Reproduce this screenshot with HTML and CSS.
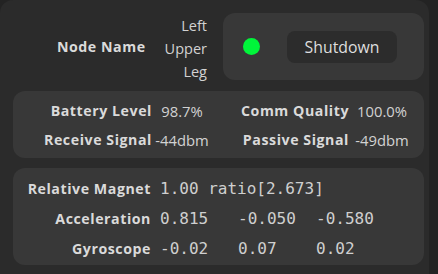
FILE: index.html
```html
<!DOCTYPE html>
<html>
<head>
<meta charset="utf-8">
<link rel="stylesheet" href="styles.css">
</head>
<body>
<div class="frame">
  <div class="top">
    <div class="name">
      <span class="label">Node Name</span>
      <div class="name-values">
        <span>Left</span>
        <span>Upper</span>
        <span>Leg</span>
      </div>
    </div>
    <div class="status">
      <span class="dot"></span>
      <button class="btn">Shutdown</button>
    </div>
  </div>
  <div class="panel stats">
    <span class="label">Battery Level</span><span class="val">98.7%</span>
    <span class="label">Comm Quality</span><span class="val">100.0%</span>
    <span class="label">Receive Signal</span><span class="val">-44dbm</span>
    <span class="label">Passive Signal</span><span class="val">-49dbm</span>
  </div>
  <div class="panel sensors">
    <span class="label">Relative Magnet</span><span class="mono span3">1.00 ratio[2.673]</span>
    <span class="label">Acceleration</span><span class="mono">0.815</span><span class="mono">-0.050</span><span class="mono">-0.580</span>
    <span class="label">Gyroscope</span><span class="mono">-0.02</span><span class="mono">0.07</span><span class="mono">0.02</span>
  </div>
</div>
</body>
</html>
```
FILE: styles.css
```css
html, body {
  margin: 0;
  padding: 0;
  background: #232323;
  overflow: hidden;
}
body {
  width: 438px;
  height: 274px;
  font-family: "Open Sans", "Noto Sans", sans-serif;
  color: #d2d2d2;
}
.frame {
  box-sizing: border-box;
  width: 429px;
  height: 274px;
  background: #2b2b2b;
  border-radius: 13px 13px 0 0;
  padding: 13px 5px 0 13px;
  display: flex;
  flex-direction: column;
}
.label {
  font-weight: 700;
  font-size: 14.2px;
  letter-spacing: 0.55px;
  color: #dadada;
  text-align: right;
  white-space: nowrap;
}
.top {
  display: flex;
  height: 67px;
  gap: 16px;
}
.name {
  flex: 1;
  display: flex;
  align-items: center;
  justify-content: flex-end;
  gap: 19px;
}
.name-values {
  display: flex;
  flex-direction: column;
  align-items: flex-end;
  line-height: 23px;
  font-size: 14.5px;
  margin-top: 3px;
}
.status {
  width: 201px;
  background: #383838;
  border-radius: 12px;
  display: flex;
  align-items: center;
  padding-left: 20px;
  box-sizing: border-box;
  gap: 27px;
}
.dot {
  width: 17px;
  height: 17px;
  border-radius: 50%;
  background: #00f53a;
}
.btn {
  width: 110px;
  height: 32px;
  border: none;
  border-radius: 8px;
  background: #2c2c2c;
  color: #dedede;
  font-family: "Open Sans", "Noto Sans", sans-serif;
  font-size: 15.8px;
  padding: 0;
}
.panel {
  background: #383838;
  border-radius: 12px;
  width: 411px;
  box-sizing: border-box;
  display: grid;
  align-items: center;
}
.stats {
  margin-top: 11px;
  height: 67px;
  grid-template-columns: 139px 60px 137px 66px;
  grid-auto-rows: 29px;
  align-content: center;
  padding-top: 1px;
}
.val {
  font-size: 14.8px;
  text-align: center;
  white-space: nowrap;
}
.sensors {
  margin-top: 10px;
  height: 97px;
  grid-template-columns: 147px 78px 78px 78px;
  grid-auto-rows: 30px;
  align-content: center;
  padding-top: 3px;
}
.sensors .label {
  padding-right: 9px;
}
.mono {
  font-family: "DejaVu Sans Mono", monospace;
  font-size: 16px;
  color: #cfcfcf;
  white-space: pre;
}
.span3 {
  grid-column: span 3;
}
```
